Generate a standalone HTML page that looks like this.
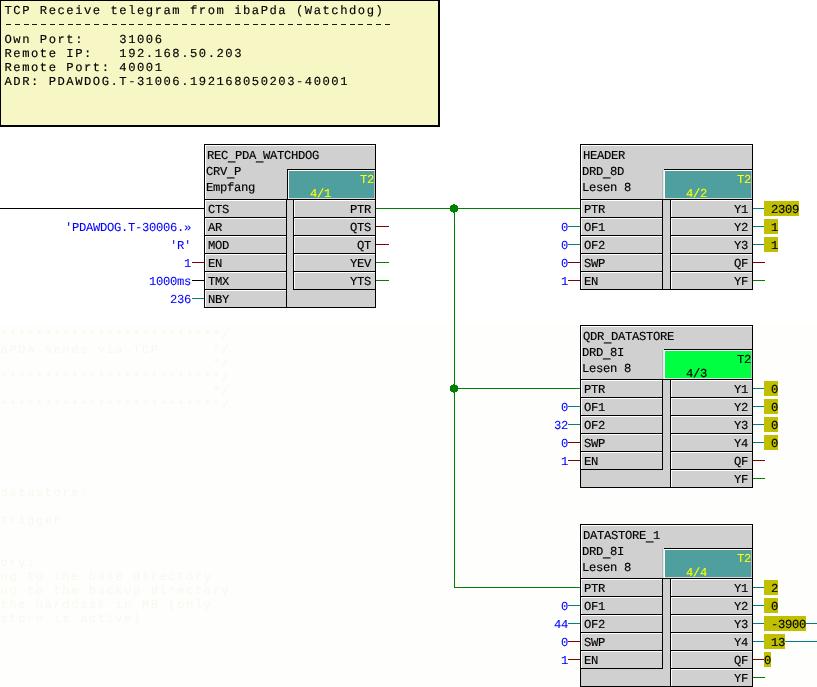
<!DOCTYPE html>
<html><head><meta charset="utf-8"><title>CFC</title>
<style>
html,body{margin:0;padding:0;background:#fff;}
body{width:817px;height:687px;position:relative;overflow:hidden;font-family:"Liberation Mono",monospace;}
body div{position:absolute;box-sizing:border-box;}
.t,.n{font-family:"Liberation Mono",monospace;font-size:12.2px;line-height:16px;height:16px;white-space:pre;-webkit-text-stroke:0.15px;text-rendering:geometricPrecision;letter-spacing:-0.320px;}
.g{-webkit-text-stroke:0;}
.u{position:relative;top:1.5px;-webkit-text-stroke:0.35px;}
.n{letter-spacing:1.520px;}
</style></head><body><div id="c" style="left:0;top:0;width:817px;height:687px;will-change:transform;">
<div style="left:0px;top:325px;width:817px;height:362px;background:#fefefd;"></div>
<div class="n g" style="left:0.5px;top:328px;color:#f8f8ee;">*************************/</div>
<div class="n g" style="left:0.5px;top:342px;color:#f8f8ee;">aPDA sends via TCP      */</div>
<div class="n g" style="left:0.5px;top:356px;color:#f8f8ee;">                        */</div>
<div class="n g" style="left:0.5px;top:370px;color:#f8f8ee;">*************************/</div>
<div class="n g" style="left:0.5px;top:384px;color:#f8f8ee;">                        */</div>
<div class="n g" style="left:0.5px;top:398px;color:#f8f8ee;">*************************/</div>
<div class="n g" style="left:0.5px;top:485px;color:#f8f8ee;">datastore:</div>
<div class="n g" style="left:0.5px;top:513px;color:#f8f8ee;">trigger</div>
<div class="n g" style="left:0.5px;top:555px;color:#f8f8ee;">ory:</div>
<div class="n g" style="left:0.5px;top:569px;color:#f8f8ee;">ng to the base directory</div>
<div class="n g" style="left:0.5px;top:583px;color:#f8f8ee;">ng to the backup directory</div>
<div class="n g" style="left:0.5px;top:597px;color:#f8f8ee;">the harddisk in MB (only</div>
<div class="n g" style="left:0.5px;top:611px;color:#f8f8ee;">store is active)</div>
<div style="left:0;top:0;width:440px;height:127px;background:#f7f7c6;border:1px solid #000;border-right-width:2px;border-bottom-width:2px;"></div>
<div style="left:6px;top:24px;width:5px;height:1px;background:#1a1a10;"></div>
<div style="left:15px;top:24px;width:5px;height:1px;background:#1a1a10;"></div>
<div style="left:24px;top:24px;width:5px;height:1px;background:#1a1a10;"></div>
<div style="left:32px;top:24px;width:5px;height:1px;background:#1a1a10;"></div>
<div style="left:41px;top:24px;width:5px;height:1px;background:#1a1a10;"></div>
<div style="left:50px;top:24px;width:5px;height:1px;background:#1a1a10;"></div>
<div style="left:59px;top:24px;width:5px;height:1px;background:#1a1a10;"></div>
<div style="left:68px;top:24px;width:5px;height:1px;background:#1a1a10;"></div>
<div style="left:76px;top:24px;width:5px;height:1px;background:#1a1a10;"></div>
<div style="left:85px;top:24px;width:5px;height:1px;background:#1a1a10;"></div>
<div style="left:94px;top:24px;width:5px;height:1px;background:#1a1a10;"></div>
<div style="left:103px;top:24px;width:5px;height:1px;background:#1a1a10;"></div>
<div style="left:112px;top:24px;width:5px;height:1px;background:#1a1a10;"></div>
<div style="left:121px;top:24px;width:5px;height:1px;background:#1a1a10;"></div>
<div style="left:129px;top:24px;width:5px;height:1px;background:#1a1a10;"></div>
<div style="left:138px;top:24px;width:5px;height:1px;background:#1a1a10;"></div>
<div style="left:147px;top:24px;width:5px;height:1px;background:#1a1a10;"></div>
<div style="left:156px;top:24px;width:5px;height:1px;background:#1a1a10;"></div>
<div style="left:165px;top:24px;width:5px;height:1px;background:#1a1a10;"></div>
<div style="left:173px;top:24px;width:5px;height:1px;background:#1a1a10;"></div>
<div style="left:182px;top:24px;width:5px;height:1px;background:#1a1a10;"></div>
<div style="left:191px;top:24px;width:5px;height:1px;background:#1a1a10;"></div>
<div style="left:200px;top:24px;width:5px;height:1px;background:#1a1a10;"></div>
<div style="left:209px;top:24px;width:5px;height:1px;background:#1a1a10;"></div>
<div style="left:217px;top:24px;width:5px;height:1px;background:#1a1a10;"></div>
<div style="left:226px;top:24px;width:5px;height:1px;background:#1a1a10;"></div>
<div style="left:235px;top:24px;width:5px;height:1px;background:#1a1a10;"></div>
<div style="left:244px;top:24px;width:5px;height:1px;background:#1a1a10;"></div>
<div style="left:253px;top:24px;width:5px;height:1px;background:#1a1a10;"></div>
<div style="left:261px;top:24px;width:5px;height:1px;background:#1a1a10;"></div>
<div style="left:270px;top:24px;width:5px;height:1px;background:#1a1a10;"></div>
<div style="left:279px;top:24px;width:5px;height:1px;background:#1a1a10;"></div>
<div style="left:288px;top:24px;width:5px;height:1px;background:#1a1a10;"></div>
<div style="left:297px;top:24px;width:5px;height:1px;background:#1a1a10;"></div>
<div style="left:306px;top:24px;width:5px;height:1px;background:#1a1a10;"></div>
<div style="left:314px;top:24px;width:5px;height:1px;background:#1a1a10;"></div>
<div style="left:323px;top:24px;width:5px;height:1px;background:#1a1a10;"></div>
<div style="left:332px;top:24px;width:5px;height:1px;background:#1a1a10;"></div>
<div style="left:341px;top:24px;width:5px;height:1px;background:#1a1a10;"></div>
<div style="left:350px;top:24px;width:5px;height:1px;background:#1a1a10;"></div>
<div style="left:358px;top:24px;width:5px;height:1px;background:#1a1a10;"></div>
<div style="left:367px;top:24px;width:5px;height:1px;background:#1a1a10;"></div>
<div style="left:376px;top:24px;width:5px;height:1px;background:#1a1a10;"></div>
<div style="left:385px;top:24px;width:5px;height:1px;background:#1a1a10;"></div>
<div class="n" style="left:4.5px;top:3px;color:#000;white-space:pre;">TCP Receive telegram from ibaPda (Watchdog)</div>
<div class="n" style="left:4.5px;top:32px;color:#000;white-space:pre;">Own Port:    31006</div>
<div class="n" style="left:4.5px;top:46px;color:#000;white-space:pre;">Remote IP:   192.168.50.203</div>
<div class="n" style="left:4.5px;top:60px;color:#000;white-space:pre;">Remote Port: 40001</div>
<div class="n" style="left:4.5px;top:74px;color:#000;white-space:pre;">ADR: PDAWDOG.T-31006.192168050203-40001</div>
<div style="left:204px;top:144px;width:172px;height:164px;background:#d0d0d0;border:1px solid #000;"></div>
<div style="left:205px;top:145px;width:170px;height:1px;background:#fff;"></div>
<div style="left:205px;top:145px;width:1px;height:54px;background:#fff;"></div>
<div class="t" style="left:207px;top:148px;color:#000;">REC<span class="u">_</span>PDA<span class="u">_</span>WATCHDOG</div>
<div class="t" style="left:206px;top:164px;color:#000;">CRV<span class="u">_</span>P</div>
<div class="t" style="left:206px;top:180px;color:#000;">Empfang</div>
<div style="left:287px;top:169px;width:1px;height:30px;background:#000;"></div>
<div style="left:287px;top:169px;width:88px;height:1px;background:#000;"></div>
<div style="left:288px;top:170px;width:87px;height:1px;background:#fff;"></div>
<div style="left:288px;top:170px;width:1px;height:29px;background:#fff;"></div>
<div style="left:289px;top:171px;width:85px;height:27px;background:#509f9f;"></div>
<div style="left:374px;top:171px;width:1px;height:27px;background:#bcbcbc;"></div>
<div style="left:289px;top:198px;width:86px;height:1px;background:#dcdcdc;"></div>
<div class="t" style="right:443px;top:172px;color:#ffff00;text-align:right;-webkit-text-stroke:0.05px;">T2</div>
<div class="t" style="left:310px;top:186px;color:#ffff00;-webkit-text-stroke:0.05px;">4/1</div>
<div style="left:204px;top:199px;width:172px;height:1px;background:#000;"></div>
<div style="left:204px;top:199px;width:83px;height:1px;background:#000;"></div>
<div style="left:205px;top:200px;width:81px;height:1px;background:#fff;"></div>
<div style="left:205px;top:200px;width:1px;height:17px;background:#fff;"></div>
<div class="t" style="left:208px;top:202px;color:#000;">CTS</div>
<div style="left:204px;top:217px;width:83px;height:1px;background:#000;"></div>
<div style="left:205px;top:218px;width:81px;height:1px;background:#fff;"></div>
<div style="left:205px;top:218px;width:1px;height:17px;background:#fff;"></div>
<div class="t" style="left:208px;top:220px;color:#000;">AR</div>
<div style="left:204px;top:235px;width:83px;height:1px;background:#000;"></div>
<div style="left:205px;top:236px;width:81px;height:1px;background:#fff;"></div>
<div style="left:205px;top:236px;width:1px;height:17px;background:#fff;"></div>
<div class="t" style="left:208px;top:238px;color:#000;">MOD</div>
<div style="left:204px;top:253px;width:83px;height:1px;background:#000;"></div>
<div style="left:205px;top:254px;width:81px;height:1px;background:#fff;"></div>
<div style="left:205px;top:254px;width:1px;height:17px;background:#fff;"></div>
<div class="t" style="left:208px;top:256px;color:#000;">EN</div>
<div style="left:204px;top:271px;width:83px;height:1px;background:#000;"></div>
<div style="left:205px;top:272px;width:81px;height:1px;background:#fff;"></div>
<div style="left:205px;top:272px;width:1px;height:17px;background:#fff;"></div>
<div class="t" style="left:208px;top:274px;color:#000;">TMX</div>
<div style="left:204px;top:289px;width:83px;height:1px;background:#000;"></div>
<div style="left:205px;top:290px;width:81px;height:1px;background:#fff;"></div>
<div style="left:205px;top:290px;width:1px;height:17px;background:#fff;"></div>
<div class="t" style="left:208px;top:292px;color:#000;">NBY</div>
<div style="left:204px;top:307px;width:83px;height:1px;background:#000;"></div>
<div style="left:286px;top:199px;width:1px;height:109px;background:#000;"></div>
<div style="left:293px;top:199px;width:83px;height:1px;background:#000;"></div>
<div style="left:294px;top:200px;width:81px;height:1px;background:#fff;"></div>
<div style="left:294px;top:200px;width:1px;height:17px;background:#fff;"></div>
<div class="t" style="right:446px;top:202px;color:#000;text-align:right;">PTR</div>
<div style="left:293px;top:217px;width:83px;height:1px;background:#000;"></div>
<div style="left:294px;top:218px;width:81px;height:1px;background:#fff;"></div>
<div style="left:294px;top:218px;width:1px;height:17px;background:#fff;"></div>
<div class="t" style="right:446px;top:220px;color:#000;text-align:right;">QTS</div>
<div style="left:293px;top:235px;width:83px;height:1px;background:#000;"></div>
<div style="left:294px;top:236px;width:81px;height:1px;background:#fff;"></div>
<div style="left:294px;top:236px;width:1px;height:17px;background:#fff;"></div>
<div class="t" style="right:446px;top:238px;color:#000;text-align:right;">QT</div>
<div style="left:293px;top:253px;width:83px;height:1px;background:#000;"></div>
<div style="left:294px;top:254px;width:81px;height:1px;background:#fff;"></div>
<div style="left:294px;top:254px;width:1px;height:17px;background:#fff;"></div>
<div class="t" style="right:446px;top:256px;color:#000;text-align:right;">YEV</div>
<div style="left:293px;top:271px;width:83px;height:1px;background:#000;"></div>
<div style="left:294px;top:272px;width:81px;height:1px;background:#fff;"></div>
<div style="left:294px;top:272px;width:1px;height:17px;background:#fff;"></div>
<div class="t" style="right:446px;top:274px;color:#000;text-align:right;">YTS</div>
<div style="left:293px;top:289px;width:83px;height:1px;background:#000;"></div>
<div style="left:293px;top:199px;width:1px;height:91px;background:#000;"></div>
<div style="left:0px;top:208px;width:204px;height:1px;background:#000;"></div>
<div class="t" style="right:626px;top:220px;color:#0000ff;text-align:right;-webkit-text-stroke:0.06px;">'PDAWDOG.T-30006.»</div>
<div class="t" style="right:626px;top:238px;color:#0000ff;text-align:right;-webkit-text-stroke:0.06px;">'R'</div>
<div style="left:192px;top:262px;width:12px;height:1px;background:#800000;"></div>
<div class="t" style="right:626px;top:256px;color:#0000ff;text-align:right;-webkit-text-stroke:0.06px;">1</div>
<div style="left:192px;top:280px;width:12px;height:1px;background:#000;"></div>
<div class="t" style="right:626px;top:274px;color:#0000ff;text-align:right;-webkit-text-stroke:0.06px;">1000ms</div>
<div style="left:192px;top:298px;width:12px;height:1px;background:#008080;"></div>
<div class="t" style="right:626px;top:292px;color:#0000ff;text-align:right;-webkit-text-stroke:0.06px;">236</div>
<div style="left:376px;top:226px;width:13px;height:1px;background:#800000;"></div>
<div style="left:376px;top:244px;width:13px;height:1px;background:#800000;"></div>
<div style="left:376px;top:262px;width:13px;height:1px;background:#008000;"></div>
<div style="left:376px;top:280px;width:13px;height:1px;background:#008000;"></div>
<div style="left:580px;top:144px;width:173px;height:146px;background:#d0d0d0;border:1px solid #000;"></div>
<div style="left:581px;top:145px;width:171px;height:1px;background:#fff;"></div>
<div style="left:581px;top:145px;width:1px;height:54px;background:#fff;"></div>
<div class="t" style="left:583px;top:148px;color:#000;">HEADER</div>
<div class="t" style="left:582px;top:164px;color:#000;">DRD<span class="u">_</span>8D</div>
<div class="t" style="left:582px;top:180px;color:#000;">Lesen 8</div>
<div style="left:662px;top:170px;width:1px;height:29px;background:#b6b6b6;"></div>
<div style="left:663px;top:170px;width:1px;height:29px;background:#e6e6e6;"></div>
<div style="left:664px;top:169px;width:88px;height:1px;background:#000;"></div>
<div style="left:664px;top:170px;width:88px;height:1px;background:#fff;"></div>
<div style="left:664px;top:170px;width:1px;height:29px;background:#fff;"></div>
<div style="left:665px;top:171px;width:86px;height:27px;background:#509f9f;"></div>
<div style="left:751px;top:171px;width:1px;height:27px;background:#bcbcbc;"></div>
<div style="left:665px;top:198px;width:87px;height:1px;background:#dcdcdc;"></div>
<div class="t" style="right:66px;top:172px;color:#ffff00;text-align:right;-webkit-text-stroke:0.05px;">T2</div>
<div class="t" style="left:686px;top:186px;color:#ffff00;-webkit-text-stroke:0.05px;">4/2</div>
<div style="left:580px;top:199px;width:173px;height:1px;background:#000;"></div>
<div style="left:580px;top:199px;width:83px;height:1px;background:#000;"></div>
<div style="left:581px;top:200px;width:81px;height:1px;background:#fff;"></div>
<div style="left:581px;top:200px;width:1px;height:17px;background:#fff;"></div>
<div class="t" style="left:584px;top:202px;color:#000;">PTR</div>
<div style="left:580px;top:217px;width:83px;height:1px;background:#000;"></div>
<div style="left:581px;top:218px;width:81px;height:1px;background:#fff;"></div>
<div style="left:581px;top:218px;width:1px;height:17px;background:#fff;"></div>
<div class="t" style="left:584px;top:220px;color:#000;">OF1</div>
<div style="left:580px;top:235px;width:83px;height:1px;background:#000;"></div>
<div style="left:581px;top:236px;width:81px;height:1px;background:#fff;"></div>
<div style="left:581px;top:236px;width:1px;height:17px;background:#fff;"></div>
<div class="t" style="left:584px;top:238px;color:#000;">OF2</div>
<div style="left:580px;top:253px;width:83px;height:1px;background:#000;"></div>
<div style="left:581px;top:254px;width:81px;height:1px;background:#fff;"></div>
<div style="left:581px;top:254px;width:1px;height:17px;background:#fff;"></div>
<div class="t" style="left:584px;top:256px;color:#000;">SWP</div>
<div style="left:580px;top:271px;width:83px;height:1px;background:#000;"></div>
<div style="left:581px;top:272px;width:81px;height:1px;background:#fff;"></div>
<div style="left:581px;top:272px;width:1px;height:17px;background:#fff;"></div>
<div class="t" style="left:584px;top:274px;color:#000;">EN</div>
<div style="left:580px;top:289px;width:83px;height:1px;background:#000;"></div>
<div style="left:662px;top:199px;width:1px;height:91px;background:#000;"></div>
<div style="left:670px;top:199px;width:83px;height:1px;background:#000;"></div>
<div style="left:671px;top:200px;width:81px;height:1px;background:#fff;"></div>
<div style="left:671px;top:200px;width:1px;height:17px;background:#fff;"></div>
<div class="t" style="right:69px;top:202px;color:#000;text-align:right;">Y1</div>
<div style="left:670px;top:217px;width:83px;height:1px;background:#000;"></div>
<div style="left:671px;top:218px;width:81px;height:1px;background:#fff;"></div>
<div style="left:671px;top:218px;width:1px;height:17px;background:#fff;"></div>
<div class="t" style="right:69px;top:220px;color:#000;text-align:right;">Y2</div>
<div style="left:670px;top:235px;width:83px;height:1px;background:#000;"></div>
<div style="left:671px;top:236px;width:81px;height:1px;background:#fff;"></div>
<div style="left:671px;top:236px;width:1px;height:17px;background:#fff;"></div>
<div class="t" style="right:69px;top:238px;color:#000;text-align:right;">Y3</div>
<div style="left:670px;top:253px;width:83px;height:1px;background:#000;"></div>
<div style="left:671px;top:254px;width:81px;height:1px;background:#fff;"></div>
<div style="left:671px;top:254px;width:1px;height:17px;background:#fff;"></div>
<div class="t" style="right:69px;top:256px;color:#000;text-align:right;">QF</div>
<div style="left:670px;top:271px;width:83px;height:1px;background:#000;"></div>
<div style="left:671px;top:272px;width:81px;height:1px;background:#fff;"></div>
<div style="left:671px;top:272px;width:1px;height:17px;background:#fff;"></div>
<div class="t" style="right:69px;top:274px;color:#000;text-align:right;">YF</div>
<div style="left:670px;top:289px;width:83px;height:1px;background:#000;"></div>
<div style="left:670px;top:199px;width:1px;height:91px;background:#000;"></div>
<div style="left:568px;top:226px;width:12px;height:1px;background:#008080;"></div>
<div class="t" style="right:249px;top:220px;color:#0000ff;text-align:right;-webkit-text-stroke:0.06px;">0</div>
<div style="left:568px;top:244px;width:12px;height:1px;background:#008080;"></div>
<div class="t" style="right:249px;top:238px;color:#0000ff;text-align:right;-webkit-text-stroke:0.06px;">0</div>
<div style="left:568px;top:262px;width:12px;height:1px;background:#800000;"></div>
<div class="t" style="right:249px;top:256px;color:#0000ff;text-align:right;-webkit-text-stroke:0.06px;">0</div>
<div style="left:568px;top:280px;width:12px;height:1px;background:#800000;"></div>
<div class="t" style="right:249px;top:274px;color:#0000ff;text-align:right;-webkit-text-stroke:0.06px;">1</div>
<div style="left:753px;top:208px;width:11px;height:1px;background:#008080;"></div>
<div style="left:764px;top:201px;width:35px;height:15px;background:#c0c000;"></div>
<div class="t" style="left:764px;top:202px;color:#000;white-space:pre;"> 2309</div>
<div style="left:753px;top:226px;width:11px;height:1px;background:#008080;"></div>
<div style="left:764px;top:219px;width:14px;height:15px;background:#c0c000;"></div>
<div class="t" style="left:764px;top:220px;color:#000;white-space:pre;"> 1</div>
<div style="left:753px;top:244px;width:11px;height:1px;background:#008080;"></div>
<div style="left:764px;top:237px;width:14px;height:15px;background:#c0c000;"></div>
<div class="t" style="left:764px;top:238px;color:#000;white-space:pre;"> 1</div>
<div style="left:753px;top:262px;width:12px;height:1px;background:#800000;"></div>
<div style="left:753px;top:280px;width:12px;height:1px;background:#008000;"></div>
<div style="left:580px;top:325px;width:173px;height:163px;background:#d0d0d0;border:1px solid #000;"></div>
<div style="left:581px;top:326px;width:171px;height:1px;background:#fff;"></div>
<div style="left:581px;top:326px;width:1px;height:53px;background:#fff;"></div>
<div class="t" style="left:583px;top:329px;color:#000;">QDR<span class="u">_</span>DATASTORE</div>
<div class="t" style="left:582px;top:345px;color:#000;">DRD<span class="u">_</span>8I</div>
<div class="t" style="left:582px;top:361px;color:#000;">Lesen 8</div>
<div style="left:662px;top:350px;width:1px;height:29px;background:#b6b6b6;"></div>
<div style="left:663px;top:350px;width:1px;height:29px;background:#e6e6e6;"></div>
<div style="left:664px;top:349px;width:88px;height:1px;background:#000;"></div>
<div style="left:664px;top:350px;width:88px;height:1px;background:#fff;"></div>
<div style="left:664px;top:350px;width:1px;height:29px;background:#fff;"></div>
<div style="left:665px;top:351px;width:86px;height:27px;background:#00ff40;"></div>
<div style="left:751px;top:351px;width:1px;height:27px;background:#bcbcbc;"></div>
<div style="left:665px;top:378px;width:87px;height:1px;background:#dcdcdc;"></div>
<div class="t" style="right:66px;top:352px;color:#000;text-align:right;">T2</div>
<div class="t" style="left:686px;top:366px;color:#000;">4/3</div>
<div style="left:580px;top:379px;width:173px;height:1px;background:#000;"></div>
<div style="left:580px;top:379px;width:83px;height:1px;background:#000;"></div>
<div style="left:581px;top:380px;width:81px;height:1px;background:#fff;"></div>
<div style="left:581px;top:380px;width:1px;height:17px;background:#fff;"></div>
<div class="t" style="left:584px;top:382px;color:#000;">PTR</div>
<div style="left:580px;top:397px;width:83px;height:1px;background:#000;"></div>
<div style="left:581px;top:398px;width:81px;height:1px;background:#fff;"></div>
<div style="left:581px;top:398px;width:1px;height:17px;background:#fff;"></div>
<div class="t" style="left:584px;top:400px;color:#000;">OF1</div>
<div style="left:580px;top:415px;width:83px;height:1px;background:#000;"></div>
<div style="left:581px;top:416px;width:81px;height:1px;background:#fff;"></div>
<div style="left:581px;top:416px;width:1px;height:17px;background:#fff;"></div>
<div class="t" style="left:584px;top:418px;color:#000;">OF2</div>
<div style="left:580px;top:433px;width:83px;height:1px;background:#000;"></div>
<div style="left:581px;top:434px;width:81px;height:1px;background:#fff;"></div>
<div style="left:581px;top:434px;width:1px;height:17px;background:#fff;"></div>
<div class="t" style="left:584px;top:436px;color:#000;">SWP</div>
<div style="left:580px;top:451px;width:83px;height:1px;background:#000;"></div>
<div style="left:581px;top:452px;width:81px;height:1px;background:#fff;"></div>
<div style="left:581px;top:452px;width:1px;height:17px;background:#fff;"></div>
<div class="t" style="left:584px;top:454px;color:#000;">EN</div>
<div style="left:580px;top:469px;width:83px;height:1px;background:#000;"></div>
<div style="left:662px;top:379px;width:1px;height:91px;background:#000;"></div>
<div style="left:670px;top:379px;width:83px;height:1px;background:#000;"></div>
<div style="left:671px;top:380px;width:81px;height:1px;background:#fff;"></div>
<div style="left:671px;top:380px;width:1px;height:17px;background:#fff;"></div>
<div class="t" style="right:69px;top:382px;color:#000;text-align:right;">Y1</div>
<div style="left:670px;top:397px;width:83px;height:1px;background:#000;"></div>
<div style="left:671px;top:398px;width:81px;height:1px;background:#fff;"></div>
<div style="left:671px;top:398px;width:1px;height:17px;background:#fff;"></div>
<div class="t" style="right:69px;top:400px;color:#000;text-align:right;">Y2</div>
<div style="left:670px;top:415px;width:83px;height:1px;background:#000;"></div>
<div style="left:671px;top:416px;width:81px;height:1px;background:#fff;"></div>
<div style="left:671px;top:416px;width:1px;height:17px;background:#fff;"></div>
<div class="t" style="right:69px;top:418px;color:#000;text-align:right;">Y3</div>
<div style="left:670px;top:433px;width:83px;height:1px;background:#000;"></div>
<div style="left:671px;top:434px;width:81px;height:1px;background:#fff;"></div>
<div style="left:671px;top:434px;width:1px;height:17px;background:#fff;"></div>
<div class="t" style="right:69px;top:436px;color:#000;text-align:right;">Y4</div>
<div style="left:670px;top:451px;width:83px;height:1px;background:#000;"></div>
<div style="left:671px;top:452px;width:81px;height:1px;background:#fff;"></div>
<div style="left:671px;top:452px;width:1px;height:17px;background:#fff;"></div>
<div class="t" style="right:69px;top:454px;color:#000;text-align:right;">QF</div>
<div style="left:670px;top:469px;width:83px;height:1px;background:#000;"></div>
<div style="left:671px;top:470px;width:81px;height:1px;background:#fff;"></div>
<div style="left:671px;top:470px;width:1px;height:17px;background:#fff;"></div>
<div class="t" style="right:69px;top:472px;color:#000;text-align:right;">YF</div>
<div style="left:670px;top:487px;width:83px;height:1px;background:#000;"></div>
<div style="left:670px;top:379px;width:1px;height:109px;background:#000;"></div>
<div style="left:568px;top:406px;width:12px;height:1px;background:#008080;"></div>
<div class="t" style="right:249px;top:400px;color:#0000ff;text-align:right;-webkit-text-stroke:0.06px;">0</div>
<div style="left:568px;top:424px;width:12px;height:1px;background:#008080;"></div>
<div class="t" style="right:249px;top:418px;color:#0000ff;text-align:right;-webkit-text-stroke:0.06px;">32</div>
<div style="left:568px;top:442px;width:12px;height:1px;background:#800000;"></div>
<div class="t" style="right:249px;top:436px;color:#0000ff;text-align:right;-webkit-text-stroke:0.06px;">0</div>
<div style="left:568px;top:460px;width:12px;height:1px;background:#800000;"></div>
<div class="t" style="right:249px;top:454px;color:#0000ff;text-align:right;-webkit-text-stroke:0.06px;">1</div>
<div style="left:753px;top:388px;width:11px;height:1px;background:#008080;"></div>
<div style="left:764px;top:381px;width:14px;height:15px;background:#c0c000;"></div>
<div class="t" style="left:764px;top:382px;color:#000;white-space:pre;"> 0</div>
<div style="left:753px;top:406px;width:11px;height:1px;background:#008080;"></div>
<div style="left:764px;top:399px;width:14px;height:15px;background:#c0c000;"></div>
<div class="t" style="left:764px;top:400px;color:#000;white-space:pre;"> 0</div>
<div style="left:753px;top:424px;width:11px;height:1px;background:#008080;"></div>
<div style="left:764px;top:417px;width:14px;height:15px;background:#c0c000;"></div>
<div class="t" style="left:764px;top:418px;color:#000;white-space:pre;"> 0</div>
<div style="left:753px;top:442px;width:11px;height:1px;background:#008080;"></div>
<div style="left:764px;top:435px;width:14px;height:15px;background:#c0c000;"></div>
<div class="t" style="left:764px;top:436px;color:#000;white-space:pre;"> 0</div>
<div style="left:753px;top:460px;width:12px;height:1px;background:#800000;"></div>
<div style="left:753px;top:478px;width:12px;height:1px;background:#008000;"></div>
<div style="left:580px;top:524px;width:173px;height:163px;background:#d0d0d0;border:1px solid #000;"></div>
<div style="left:581px;top:525px;width:171px;height:1px;background:#fff;"></div>
<div style="left:581px;top:525px;width:1px;height:53px;background:#fff;"></div>
<div class="t" style="left:583px;top:528px;color:#000;">DATASTORE<span class="u">_</span>1</div>
<div class="t" style="left:582px;top:544px;color:#000;">DRD<span class="u">_</span>8I</div>
<div class="t" style="left:582px;top:560px;color:#000;">Lesen 8</div>
<div style="left:662px;top:549px;width:1px;height:29px;background:#b6b6b6;"></div>
<div style="left:663px;top:549px;width:1px;height:29px;background:#e6e6e6;"></div>
<div style="left:664px;top:548px;width:88px;height:1px;background:#000;"></div>
<div style="left:664px;top:549px;width:88px;height:1px;background:#fff;"></div>
<div style="left:664px;top:549px;width:1px;height:29px;background:#fff;"></div>
<div style="left:665px;top:550px;width:86px;height:27px;background:#509f9f;"></div>
<div style="left:751px;top:550px;width:1px;height:27px;background:#bcbcbc;"></div>
<div style="left:665px;top:577px;width:87px;height:1px;background:#dcdcdc;"></div>
<div class="t" style="right:66px;top:551px;color:#ffff00;text-align:right;-webkit-text-stroke:0.05px;">T2</div>
<div class="t" style="left:686px;top:565px;color:#ffff00;-webkit-text-stroke:0.05px;">4/4</div>
<div style="left:580px;top:578px;width:173px;height:1px;background:#000;"></div>
<div style="left:580px;top:578px;width:83px;height:1px;background:#000;"></div>
<div style="left:581px;top:579px;width:81px;height:1px;background:#fff;"></div>
<div style="left:581px;top:579px;width:1px;height:17px;background:#fff;"></div>
<div class="t" style="left:584px;top:581px;color:#000;">PTR</div>
<div style="left:580px;top:596px;width:83px;height:1px;background:#000;"></div>
<div style="left:581px;top:597px;width:81px;height:1px;background:#fff;"></div>
<div style="left:581px;top:597px;width:1px;height:17px;background:#fff;"></div>
<div class="t" style="left:584px;top:599px;color:#000;">OF1</div>
<div style="left:580px;top:614px;width:83px;height:1px;background:#000;"></div>
<div style="left:581px;top:615px;width:81px;height:1px;background:#fff;"></div>
<div style="left:581px;top:615px;width:1px;height:17px;background:#fff;"></div>
<div class="t" style="left:584px;top:617px;color:#000;">OF2</div>
<div style="left:580px;top:632px;width:83px;height:1px;background:#000;"></div>
<div style="left:581px;top:633px;width:81px;height:1px;background:#fff;"></div>
<div style="left:581px;top:633px;width:1px;height:17px;background:#fff;"></div>
<div class="t" style="left:584px;top:635px;color:#000;">SWP</div>
<div style="left:580px;top:650px;width:83px;height:1px;background:#000;"></div>
<div style="left:581px;top:651px;width:81px;height:1px;background:#fff;"></div>
<div style="left:581px;top:651px;width:1px;height:17px;background:#fff;"></div>
<div class="t" style="left:584px;top:653px;color:#000;">EN</div>
<div style="left:580px;top:668px;width:83px;height:1px;background:#000;"></div>
<div style="left:662px;top:578px;width:1px;height:91px;background:#000;"></div>
<div style="left:670px;top:578px;width:83px;height:1px;background:#000;"></div>
<div style="left:671px;top:579px;width:81px;height:1px;background:#fff;"></div>
<div style="left:671px;top:579px;width:1px;height:17px;background:#fff;"></div>
<div class="t" style="right:69px;top:581px;color:#000;text-align:right;">Y1</div>
<div style="left:670px;top:596px;width:83px;height:1px;background:#000;"></div>
<div style="left:671px;top:597px;width:81px;height:1px;background:#fff;"></div>
<div style="left:671px;top:597px;width:1px;height:17px;background:#fff;"></div>
<div class="t" style="right:69px;top:599px;color:#000;text-align:right;">Y2</div>
<div style="left:670px;top:614px;width:83px;height:1px;background:#000;"></div>
<div style="left:671px;top:615px;width:81px;height:1px;background:#fff;"></div>
<div style="left:671px;top:615px;width:1px;height:17px;background:#fff;"></div>
<div class="t" style="right:69px;top:617px;color:#000;text-align:right;">Y3</div>
<div style="left:670px;top:632px;width:83px;height:1px;background:#000;"></div>
<div style="left:671px;top:633px;width:81px;height:1px;background:#fff;"></div>
<div style="left:671px;top:633px;width:1px;height:17px;background:#fff;"></div>
<div class="t" style="right:69px;top:635px;color:#000;text-align:right;">Y4</div>
<div style="left:670px;top:650px;width:83px;height:1px;background:#000;"></div>
<div style="left:671px;top:651px;width:81px;height:1px;background:#fff;"></div>
<div style="left:671px;top:651px;width:1px;height:17px;background:#fff;"></div>
<div class="t" style="right:69px;top:653px;color:#000;text-align:right;">QF</div>
<div style="left:670px;top:668px;width:83px;height:1px;background:#000;"></div>
<div style="left:671px;top:669px;width:81px;height:1px;background:#fff;"></div>
<div style="left:671px;top:669px;width:1px;height:17px;background:#fff;"></div>
<div class="t" style="right:69px;top:671px;color:#000;text-align:right;">YF</div>
<div style="left:670px;top:686px;width:83px;height:1px;background:#000;"></div>
<div style="left:670px;top:578px;width:1px;height:109px;background:#000;"></div>
<div style="left:568px;top:605px;width:12px;height:1px;background:#008080;"></div>
<div class="t" style="right:249px;top:599px;color:#0000ff;text-align:right;-webkit-text-stroke:0.06px;">0</div>
<div style="left:568px;top:623px;width:12px;height:1px;background:#008080;"></div>
<div class="t" style="right:249px;top:617px;color:#0000ff;text-align:right;-webkit-text-stroke:0.06px;">44</div>
<div style="left:568px;top:641px;width:12px;height:1px;background:#800000;"></div>
<div class="t" style="right:249px;top:635px;color:#0000ff;text-align:right;-webkit-text-stroke:0.06px;">0</div>
<div style="left:568px;top:659px;width:12px;height:1px;background:#800000;"></div>
<div class="t" style="right:249px;top:653px;color:#0000ff;text-align:right;-webkit-text-stroke:0.06px;">1</div>
<div style="left:753px;top:587px;width:11px;height:1px;background:#008080;"></div>
<div style="left:764px;top:580px;width:14px;height:15px;background:#c0c000;"></div>
<div class="t" style="left:764px;top:581px;color:#000;white-space:pre;"> 2</div>
<div style="left:753px;top:605px;width:11px;height:1px;background:#008080;"></div>
<div style="left:764px;top:598px;width:14px;height:15px;background:#c0c000;"></div>
<div class="t" style="left:764px;top:599px;color:#000;white-space:pre;"> 0</div>
<div style="left:753px;top:623px;width:11px;height:1px;background:#008080;"></div>
<div style="left:764px;top:616px;width:42px;height:15px;background:#c0c000;"></div>
<div class="t" style="left:764px;top:617px;color:#000;white-space:pre;"> -3900</div>
<div style="left:806px;top:623px;width:11px;height:1px;background:#008080;"></div>
<div style="left:753px;top:641px;width:11px;height:1px;background:#008080;"></div>
<div style="left:764px;top:634px;width:21px;height:15px;background:#c0c000;"></div>
<div class="t" style="left:764px;top:635px;color:#000;white-space:pre;"> 13</div>
<div style="left:785px;top:641px;width:32px;height:1px;background:#008080;"></div>
<div style="left:753px;top:659px;width:11px;height:1px;background:#800000;"></div>
<div style="left:764px;top:652px;width:7px;height:15px;background:#c0c000;"></div>
<div class="t" style="left:764px;top:653px;color:#000;white-space:pre;">0</div>
<div style="left:753px;top:677px;width:12px;height:1px;background:#008000;"></div>
<div style="left:376px;top:208px;width:204px;height:1px;background:#008000;"></div>
<div style="left:454px;top:208px;width:1px;height:380px;background:#008000;"></div>
<div style="left:454px;top:388px;width:126px;height:1px;background:#008000;"></div>
<div style="left:454px;top:587px;width:126px;height:1px;background:#008000;"></div>
<div style="left:453px;top:204px;width:2px;height:9px;background:#008000;"></div>
<div style="left:451px;top:205px;width:6px;height:7px;background:#008000;"></div>
<div style="left:450px;top:206px;width:8px;height:5px;background:#008000;"></div>
<div style="left:453px;top:384px;width:2px;height:9px;background:#008000;"></div>
<div style="left:451px;top:385px;width:6px;height:7px;background:#008000;"></div>
<div style="left:450px;top:386px;width:8px;height:5px;background:#008000;"></div>
</div></body></html>
